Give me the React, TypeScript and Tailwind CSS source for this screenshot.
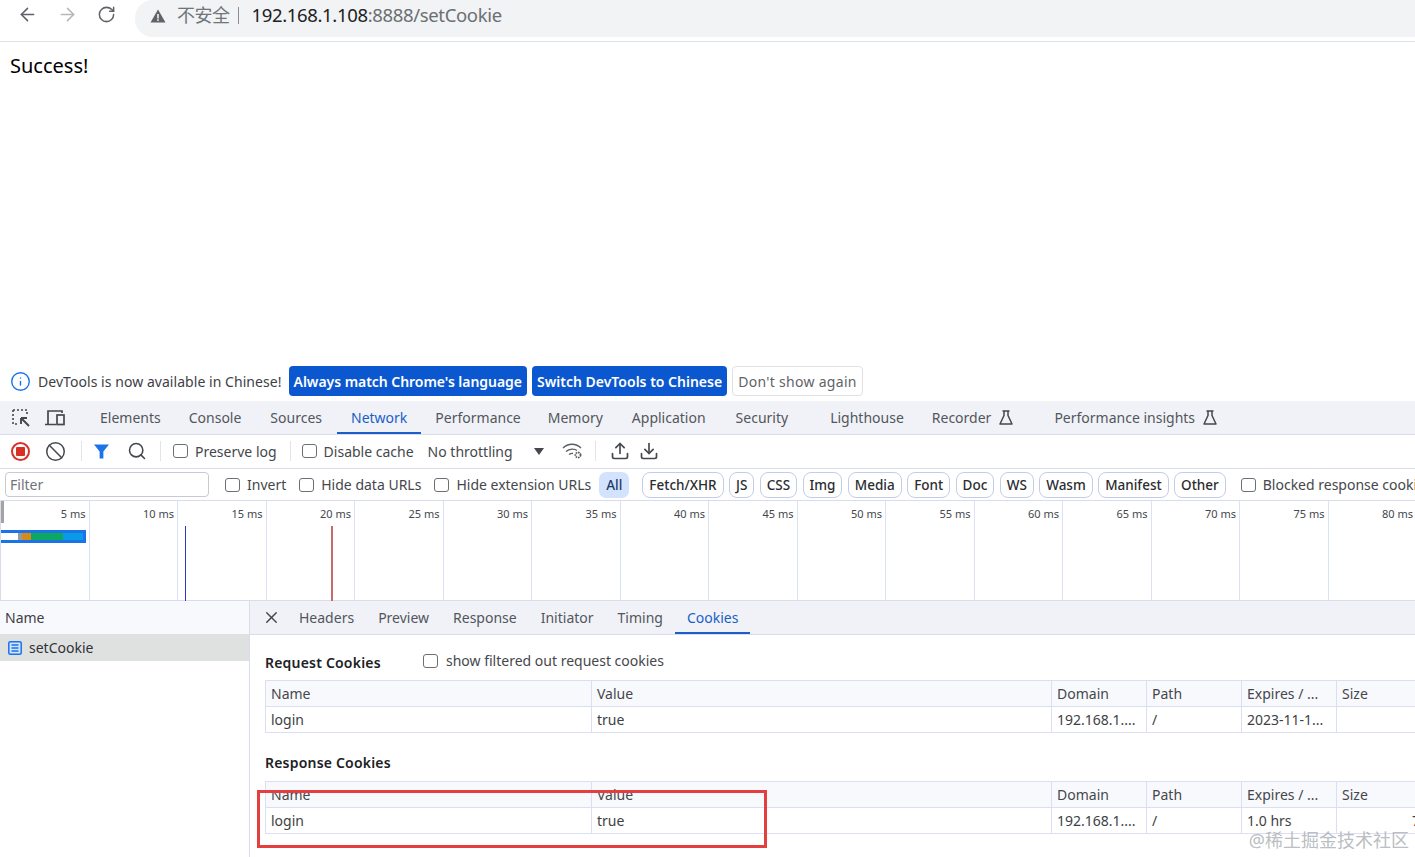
import { ArrowLeft, ArrowRight, RotateCw, Search, X, Ban, Info, Upload, Download } from 'lucide-react';

const fontStack = { fontFamily: '"Noto Sans", "Noto Sans CJK SC", sans-serif' };

// tick labels for the overview ruler
const ticks = [5, 10, 15, 20, 25, 30, 35, 40, 45, 50, 55, 60, 65, 70, 75, 80];
const chips = ['Fetch/XHR', 'JS', 'CSS', 'Img', 'Media', 'Font', 'Doc', 'WS', 'Wasm', 'Manifest', 'Other'];

function Check({ label, className = '' }: { label?: string; className?: string }) {
  return (
    <span className={`flex items-center gap-[7px] whitespace-nowrap ${className}`}>
      <span className="w-[15px] h-[14px] shrink-0 rounded-[3px] border border-[#6d6f75] bg-white" />
      {label && <span>{label}</span>}
    </span>
  );
}

function Flask() {
  return (
    <svg width="14" height="15" viewBox="0 0 14 15" fill="none" stroke="#45474c" strokeWidth="1.5" className="shrink-0">
      <path d="M3.5 1h7M5 1v4.5L1 14h12L9 5.5V1" strokeLinejoin="round" />
    </svg>
  );
}

function Tab({ name, active, flask, className = '' }: { name: string; active?: boolean; flask?: boolean; className?: string }) {
  return (
    <div
      className={`flex items-center h-full px-[14px] gap-[8px] whitespace-nowrap ${
        active ? 'text-[#1a5fc7] border-b-2 border-[#1a5fc7] pt-[2px]' : 'text-[#53565c]'
      } ${className}`}
    >
      {name}
      {flask && <Flask />}
    </div>
  );
}

function CookieTable({ expires, size }: { expires: string; size?: string }) {
  const cols = 'grid grid-cols-[326px_460px_95px_95px_95px_95px] w-[1166px]';
  const cell = 'px-[5px] border-r border-[#dcdff3] truncate';
  return (
    <div className="border-y border-l border-[#dcdff3] text-[#3d3f44]">
      <div className={`${cols} h-[26px] leading-[25px] bg-[#f8f9fd] border-b border-[#dcdff3] text-[#45474c]`}>
        <div className={cell}>Name</div>
        <div className={cell}>Value</div>
        <div className={cell}>Domain</div>
        <div className={cell}>Path</div>
        <div className={cell}>Expires / ...</div>
        <div className={cell}>Size</div>
      </div>
      <div className={`${cols} h-[25px] leading-[25px]`}>
        <div className={cell}>login</div>
        <div className={cell}>true</div>
        <div className={cell}>192.168.1....</div>
        <div className={cell}>/</div>
        <div className={cell}>{expires}</div>
        <div className={`${cell} pl-[75px]`}>{size}</div>
      </div>
    </div>
  );
}

export default function App() {
  return (
    <div style={fontStack} className="relative w-[1415px] h-[857px] overflow-hidden bg-white text-[14px] text-[#303236]">
      {/* Browser chrome */}
      <div className="flex items-start h-[42px] border-b border-[#dfe0e2]">
        <div className="flex items-center w-[135px] h-[29px] pl-[17px] gap-[19px] text-[#5f6368]">
          <ArrowLeft size={21} strokeWidth={1.8} />
          <ArrowRight size={21} strokeWidth={1.8} className="text-[#b5b7ba]" />
          <RotateCw size={19} strokeWidth={1.9} />
        </div>
        <div className="flex-1 h-[37px] rounded-l-[18px] bg-[#f1f3f4] flex items-center pl-[15px]">
          <svg width="16" height="14" viewBox="0 0 16 14" className="shrink-0 -mt-[5px]">
            <path d="M8 0.5 L15.5 13.5 H0.5 Z" fill="#5f6368" />
            <rect x="7.2" y="5" width="1.6" height="4.5" fill="#f1f3f4" />
            <rect x="7.2" y="10.3" width="1.6" height="1.6" fill="#f1f3f4" />
          </svg>
          <span className="ml-[11px] -mt-[7px] text-[18px] text-[#70757a] tracking-[-0.5px]">不安全</span>
          <span className="ml-[8px] -mt-[7px] w-[1px] h-[17px] bg-[#8a8d91]" />
          <span className="ml-[13px] -mt-[7px] text-[18.5px] tracking-[-0.35px] text-[#202124] whitespace-nowrap">
            192.168.1.108<span className="text-[#6b6f73]">:8888/setCookie</span>
          </span>
        </div>
      </div>

      {/* Page body */}
      <div className="h-[323px] pl-[10px] pt-[9px] text-[20px] leading-[30px] text-black">Success!</div>

      {/* Language infobar */}
      <div className="flex items-center h-[36px] pb-[4px] pl-[10px] text-[#3e4045]">
        <Info size={21} strokeWidth={1.6} className="text-[#1a73e8] shrink-0" />
        <span className="ml-[7px] whitespace-nowrap tracking-[0.05px]">DevTools is now available in Chinese!</span>
        <span className="ml-[7px] h-[30px] px-[5px] flex items-center rounded-[4px] bg-[#0b57d0] text-white font-semibold whitespace-nowrap tracking-[-0.04px]">
          Always match Chrome's language
        </span>
        <span className="ml-[5px] h-[30px] px-[5px] flex items-center rounded-[4px] bg-[#0b57d0] text-white font-semibold whitespace-nowrap">
          Switch DevTools to Chinese
        </span>
        <span className="ml-[5px] h-[30px] px-[5px] flex items-center rounded-[4px] border border-[#dfe1e5] text-[#5f6368] whitespace-nowrap tracking-[0.3px]">
          Don't show again
        </span>
      </div>

      {/* DevTools tab strip */}
      <div className="flex items-center h-[34px] bg-[#f0f2f8] border-b border-[#d9dcec]">
        <div className="flex items-center w-[86px] h-full pl-[11px] gap-[13px] text-[#45474c] shrink-0">
          <svg width="20" height="20" viewBox="0 0 20 20" fill="none" stroke="#45474c" strokeWidth="1.6">
            <path d="M2 2h14v6M2 2v14h6" strokeDasharray="2 2" />
            <path d="M18 18 L10 10 M10 10 h6 M10 10 v6" strokeWidth="1.9" />
          </svg>
          <svg width="21" height="17" viewBox="0 0 21 17" fill="none" stroke="#45474c" strokeWidth="1.7">
            <path d="M1 15.5h11M4 15V2h14v2" />
            <rect x="13" y="6" width="7" height="9.5" />
          </svg>
        </div>
        <Tab name="Elements" />
        <Tab name="Console" />
        <Tab name="Sources" className="ml-[1px]" />
        <Tab name="Network" active className="ml-[1px]" />
        <Tab name="Performance" />
        <Tab name="Memory" className="-ml-[1px]" />
        <Tab name="Application" className="ml-[1px]" />
        <Tab name="Security" className="ml-[2px] mr-[14px]" />
        <Tab name="Lighthouse" />
        <Tab name="Recorder" flask className="mr-[13px]" />
        <Tab name="Performance insights" flask />
      </div>

      {/* Network toolbar */}
      <div className="flex items-center h-[34px] pb-[1px] border-b border-[#d9dcec] text-[#45474c]">
        <div className="flex items-center pl-[11px]">
          <span className="w-[19px] h-[19px] rounded-full border-2 border-[#d93025] flex items-center justify-center">
            <span className="w-[9px] h-[9px] rounded-[1px] bg-[#d93025]" />
          </span>
          <Ban size={21} strokeWidth={1.7} className="ml-[15px] text-[#45474c]" />
          <span className="ml-[15px] w-[1px] h-[20px] bg-[#e2e4ea]" />
          <svg width="15" height="15" viewBox="0 0 16 15" className="ml-[12px]">
            <path d="M0 0h16L10 7.5V15H6V7.5Z" fill="#1a73e8" />
          </svg>
          <Search size={20} strokeWidth={1.9} className="ml-[18px] text-[#45474c]" />
          <span className="ml-[13px] w-[1px] h-[20px] bg-[#e2e4ea]" />
        </div>
        <Check label="Preserve log" className="ml-[12px]" />
        <span className="ml-[13px] w-[1px] h-[20px] bg-[#e2e4ea]" />
        <Check label="Disable cache" className="ml-[11px]" />
        <span className="ml-[14px] whitespace-nowrap">No throttling</span>
        <span className="ml-[21px] w-0 h-0 border-l-[5px] border-r-[5px] border-t-[7px] border-l-transparent border-r-transparent border-t-[#45474c]" />
        <svg width="22" height="18" viewBox="0 0 22 18" fill="none" stroke="#5b5d62" strokeWidth="1.4" className="ml-[18px]">
          <path d="M1 6c5-5 13-5 18 0M4 9.5c3.5-3 8.5-3 11 -1M7 12.5c1.5-1 3-1.2 4-1" />
          <circle cx="16" cy="13" r="2.6" strokeWidth="1.8" strokeDasharray="1.6 0.8" />
        </svg>
        <span className="ml-[11px] w-[1px] h-[20px] bg-[#e2e4ea]" />
        <Upload size={20} strokeWidth={2} className="ml-[14px]" />
        <Download size={20} strokeWidth={2} className="ml-[9px]" />
      </div>

      {/* Filter row */}
      <div className="flex items-center h-[32px] border-b border-[#d9dcec] whitespace-nowrap text-[#45474c]">
        <div className="ml-[5px] w-[204px] shrink-0 h-[25px] leading-[23px] rounded-[4px] border border-[#c8cad0] pl-[4px] text-[#70737a]">Filter</div>
        <Check label="Invert" className="ml-[16px]" />
        <Check label="Hide data URLs" className="ml-[13px]" />
        <Check label="Hide extension URLs" className="ml-[13px]" />
        <span className="ml-[8px] h-[26px] px-[7px] leading-[26px] rounded-[7px] bg-[#d3e3fd] text-[#1f3a68] text-[13.5px] font-medium">All</span>
        <span className="ml-[6px] mr-[7px] w-[1px] h-[18px] bg-[#e2e4ea]" />
        <div className="flex gap-[5.4px]">
          {chips.map((c) => (
            <span key={c} className="h-[26px] px-[6px] leading-[24px] rounded-[8px] border border-[#c4cde8] text-[#2b2d31] text-[13.5px] font-medium">
              {c}
            </span>
          ))}
        </div>
        <Check label="Blocked response cookies" className="ml-[15px]" />
      </div>

      {/* Overview timeline */}
      <div className="relative flex h-[100px] border-b border-l border-[#d9dcec]">
        {ticks.map((t) => (
          <div key={t} className="w-[88.5px] shrink-0 h-full border-r border-[#dbe2f6] pr-[3px] pt-[5px] text-right text-[11px] leading-[16px] text-[#45474c]">
            {t} ms
          </div>
        ))}
        <span className="absolute left-0 top-0 w-[3px] h-[22px] bg-[#a3a3a3]" />
        <div className="absolute left-0 top-[29px] w-[85px] h-[13px] bg-[#1a73e8] flex items-center">
          <span className="w-[17px] h-[7px] bg-white" />
          <span className="w-[4px] h-[7px] bg-[#9a9a9a]" />
          <span className="w-[9px] h-[7px] bg-[#d68a1c]" />
          <span className="w-[32px] h-[7px] bg-[#0ea760]" />
          <span className="w-[20px] h-[7px] bg-[#0a9be6]" />
        </div>
        <span className="absolute left-[184px] top-[25px] w-[1px] h-[75px] bg-[#3333cc]" />
        <span className="absolute left-[330px] top-[25px] w-[2px] h-[75px] bg-[#c96a6a]" />
      </div>

      {/* Requests list and details */}
      <div className="flex h-[256px]">
        <div className="w-[250px] shrink-0 border-r border-[#d9dcec]">
          <div className="h-[33px] leading-[33px] pl-[5px] bg-[#f8f9fd] text-[#3e4045]">Name</div>
          <div className="flex items-center h-[27px] pl-[8px] gap-[7px] bg-[#dfe1e1] text-[#303236]">
            <svg width="14" height="14" viewBox="0 0 14 14" fill="none" className="shrink-0">
              <rect x="0.8" y="0.8" width="12.4" height="12.4" rx="1.5" fill="#d3e3fd" stroke="#1a73e8" strokeWidth="1.5" />
              <path d="M3.5 4h7M3.5 7h7M3.5 10h7" stroke="#1a73e8" strokeWidth="1.3" />
            </svg>
            setCookie
          </div>
        </div>
        <div className="flex-1 min-w-0">
          <div className="flex items-center h-[34px] bg-[#f0f2f8] border-b border-[#d9dcec] text-[#53565c]">
            <X size={19} strokeWidth={1.8} className="ml-[12px] mr-[6px] text-[#45474c]" />
            <div className="flex items-center h-full px-[12px]">Headers</div>
            <div className="flex items-center h-full px-[12px]">Preview</div>
            <div className="flex items-center h-full px-[12px]">Response</div>
            <div className="flex items-center h-full px-[12px]">Initiator</div>
            <div className="flex items-center h-full px-[12px]">Timing</div>
            <div className="flex items-center h-full px-[12px] pt-[2px] text-[#1a5fc7] border-b-2 border-[#1a5fc7]">Cookies</div>
          </div>
          <div className="pl-[15px]">
            <div className="flex items-center h-[45px] pt-[7px]">
              <span className="w-[158px] font-semibold text-[#202124] pt-[3px] tracking-[0.2px]">Request Cookies</span>
              <Check label="show filtered out request cookies" className="gap-[8px] text-[#45474c] -mt-[1px]" />
            </div>
            <CookieTable expires="2023-11-1..." />
            <div className="h-[48px] pt-[18px] leading-[24px] font-semibold text-[#202124] tracking-[0.2px]">Response Cookies</div>
            <CookieTable expires="1.0 hrs" size="7" />
          </div>
        </div>
      </div>

      {/* Screenshot annotation + watermark */}
      <div className="absolute left-[257px] top-[790px] w-[510px] h-[58px] border-[3px] border-[#e53e3e] pointer-events-none" />
      <div className="absolute right-[6px] top-[829px] text-[18px] leading-[22px] text-[#a9acb1]/80 whitespace-nowrap">@稀土掘金技术社区</div>
    </div>
  );
}
